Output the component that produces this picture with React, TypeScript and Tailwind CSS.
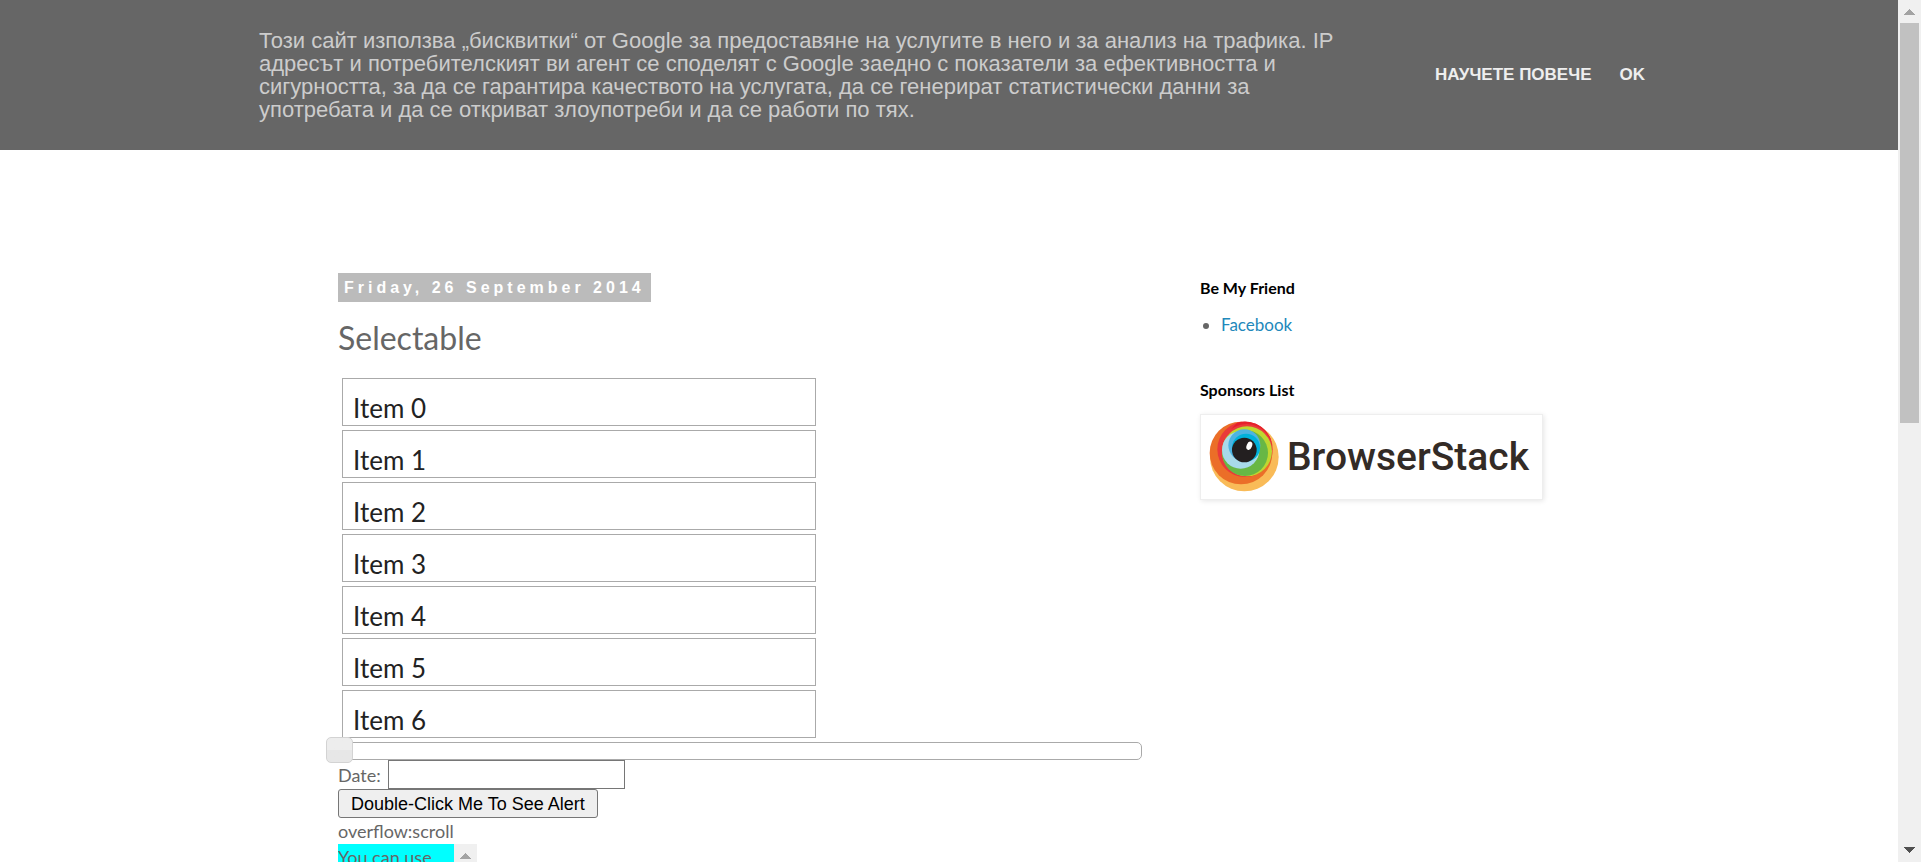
import { useState } from "react";

const items = [0, 1, 2, 3, 4, 5, 6];

function Arrow({ down = false, color }: { down?: boolean; color: string }) {
  return (
    <svg width="11" height="6" viewBox="0 0 11 6" shapeRendering="crispEdges" aria-hidden="true">
      <path d={down ? "M0 0H11L5.5 6Z" : "M0 6H11L5.5 0Z"} fill={color} />
    </svg>
  );
}

function PageScrollbar() {
  return (
    <div className="flex w-[23px] shrink-0 flex-col items-center justify-between bg-[#f0f0f0] pb-[9px] pt-[9px]">
      <div className="flex w-full flex-1 flex-col items-center gap-2">
        <Arrow color="#a3a3a3" />
        <div className="h-[400px] w-[19px] bg-[#c1c1c1]" />
      </div>
      <Arrow down color="#505050" />
    </div>
  );
}

function CookieBar() {
  return (
    <div className="bg-[#666] py-[29px] font-['Liberation_Sans',Arial,sans-serif]">
      <div className="mx-auto flex max-w-[1392px] items-center justify-between pl-1.5">
        <p className="max-w-[1100px] text-[22px] leading-[23px] text-[#ccc]">
          Този сайт използва „бисквитки“ от Google за предоставяне на услугите в него и за анализ на трафика. IP
          адресът и потребителският ви агент се споделят с Google заедно с показатели за ефективността и
          сигурността, за да се гарантира качеството на услугата, да се генерират статистически данни за
          употребата и да се откриват злоупотреби и да се работи по тях.
        </p>
        <div className="flex gap-7 whitespace-nowrap text-[17px] font-bold leading-6 text-[#eee]">
          <a href="#more">НАУЧЕТЕ ПОВЕЧЕ</a>
          <a href="#ok">OK</a>
        </div>
      </div>
    </div>
  );
}

function BrowserStackLogo() {
  return (
    <a
      href="#browserstack"
      className="flex w-[343px] items-center gap-1.5 border border-[#eee] bg-white px-2 py-1.5 shadow-[1px_1px_5px_rgba(0,0,0,0.1)]"
    >
      <svg className="shrink-0" width="72" height="72" viewBox="44 35 216 216" aria-hidden="true">
        <circle cx="150" cy="143" r="103" fill="#f9bb58" />
        <circle cx="140" cy="131" r="94" fill="#eb6e28" />
        <circle cx="152" cy="120" r="83" fill="#e93a3a" />
        <path d="M128 40A83 83 0 0 1 235 120A78 78 0 0 0 110 60Z" fill="#e6202b" />
        <circle cx="158" cy="126" r="75" fill="#bfd730" />
        <circle cx="152" cy="131" r="69" fill="#68b745" />
        <circle cx="139" cy="122" r="56" fill="#a8daea" />
        <circle cx="150" cy="108" r="48" fill="#4db4e2" />
        <circle cx="155" cy="115" r="42" fill="#00b1db" />
        <circle cx="150" cy="122" r="37" fill="#231f20" />
        <ellipse cx="165" cy="109" rx="8" ry="13" transform="rotate(22 165 109)" fill="#fff" />
      </svg>
      <span className="font-['Roboto',sans-serif] text-[39px] font-medium leading-[72px] text-[#332b26]">
        BrowserStack
      </span>
    </a>
  );
}

function Slider() {
  const [value, setValue] = useState(0);
  return (
    <div className="relative h-[18px] rounded-[5px] border border-[#aaa]">
      <input
        type="range"
        aria-label="Value"
        value={value}
        onChange={(e) => setValue(Number(e.target.value))}
        className="absolute -inset-x-[13px] -top-[6px] h-[26px] appearance-none bg-transparent [&::-webkit-slider-thumb]:h-[26px] [&::-webkit-slider-thumb]:w-[27px] [&::-webkit-slider-thumb]:appearance-none [&::-webkit-slider-thumb]:rounded-[5px] [&::-webkit-slider-thumb]:border [&::-webkit-slider-thumb]:border-[#d3d3d3] [&::-webkit-slider-thumb]:bg-linear-to-b [&::-webkit-slider-thumb]:from-[#ededed] [&::-webkit-slider-thumb]:from-50% [&::-webkit-slider-thumb]:to-[#e7e7e7] [&::-webkit-slider-thumb]:to-50%"
      />
    </div>
  );
}

function Post() {
  return (
    <main className="w-[804px] text-[18px] leading-[26px]">
      <h2 className="w-fit bg-[#bbb] px-1.5 font-['Liberation_Sans',Arial,sans-serif] text-[16px] font-bold leading-[29px] tracking-[4px] text-white">
        Friday, 26 September 2014
      </h2>
      <h3 className="mt-4 text-[32px] leading-10">Selectable</h3>
      <ol className="ml-1 mt-5 flex w-[474px] flex-col gap-1 pb-1 text-[26px] text-[#222]">
        {items.map((n) => (
          <li key={n} className="h-12 border border-[#aaa] px-2.5 pt-2 leading-[42px]">
            Item {n}
          </li>
        ))}
      </ol>
      <Slider />
      <div className="flex items-center gap-1.5">
        <label htmlFor="date" className="w-11">Date:</label>
        <input id="date" type="text" className="h-[29px] w-[237px] border border-[#767676] bg-white px-1" />
      </div>
      <button
        type="button"
        className="block h-[29px] rounded-[3px] border border-[#767676] bg-[#efefef] px-3 font-['Liberation_Sans',Arial,sans-serif] text-[18px] leading-[26px] text-black"
      >
        Double-Click Me To See Alert
      </button>
      <p>overflow:scroll</p>
      <div className="flex h-[125px] w-[139px]">
        <p className="flex-1 overflow-hidden bg-[#00ffff]">You can use</p>
        <div className="flex w-[23px] justify-center bg-[#f0f0f0] pt-[9px]">
          <Arrow color="#a3a3a3" />
        </div>
      </div>
    </main>
  );
}

function Sidebar() {
  return (
    <aside className="w-[360px] pt-[5px]">
      <h2 className="text-[16px] font-bold leading-5 text-black">Be My Friend</h2>
      <ul className="mt-4 list-disc pl-[21px] text-[17px] leading-[22px]">
        <li>
          <a href="#facebook" className="text-[#2288bb]">
            Facebook
          </a>
        </li>
      </ul>
      <h2 className="mb-3.5 mt-11 text-[16px] font-bold leading-5 text-black">Sponsors List</h2>
      <BrowserStackLogo />
    </aside>
  );
}

export default function App() {
  return (
    <div className="flex h-screen bg-white">
      <div className="flex-1 overflow-hidden">
        <CookieBar />
        <div className="mx-auto flex max-w-[1222px] justify-between pt-[123px] font-['Lato','Open_Sans',sans-serif] text-[#666]">
          <Post />
          <Sidebar />
        </div>
      </div>
      <PageScrollbar />
    </div>
  );
}
